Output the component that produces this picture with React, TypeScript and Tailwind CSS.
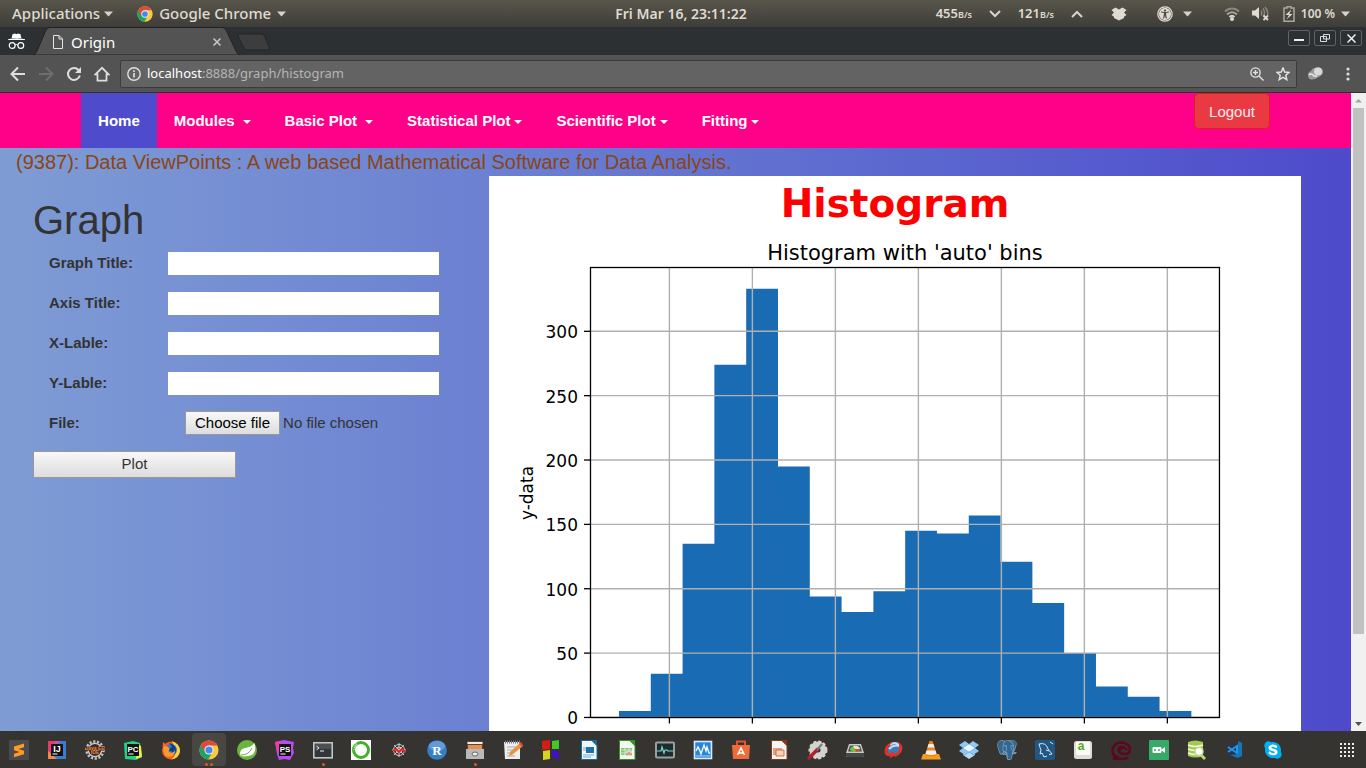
import type { ReactNode } from "react";
import { FaSkype, FaUniversalAccess } from "react-icons/fa";
import { SiPostgresql } from "react-icons/si";

function Triangle() {
  return (
    <svg width="9" height="6" viewBox="0 0 9 6" aria-hidden="true">
      <path d="M0 0.5h9L4.5 5.5z" fill="#d6d3cc" />
    </svg>
  );
}

function ChromeLogo({ size }: { size: number }) {
  return (
    <svg width={size} height={size} viewBox="0 0 48 48" aria-hidden="true">
      <circle cx="24" cy="24" r="23" fill="#fbc93d" />
      <path d="M4 12.5A23 23 0 0 0 22 47L32 30 24 24z" fill="#1da462" />
      <path d="M4 12.5 14 30 24 13H44A23 23 0 0 0 4 12.5z" fill="#dd4b3e" />
      <circle cx="24" cy="24" r="11" fill="#f4f4f4" />
      <circle cx="24" cy="24" r="8.6" fill="#4688f1" />
    </svg>
  );
}

function Chevron({ up }: { up?: boolean }) {
  return (
    <svg width="12" height="8" viewBox="0 0 12 8" fill="none" stroke="#d8d5ce" strokeWidth="2" aria-hidden="true">
      <path d={up ? "M1 7 6 2l5 5" : "M1 1l5 5 5-5"} />
    </svg>
  );
}

function Speed({ value }: { value: string }) {
  return (
    <span className="flex w-[38px] items-baseline justify-center whitespace-nowrap">
      {value}
      <span className="text-[9px]">B/s</span>
    </span>
  );
}

function SystemBar() {
  return (
    <header className="grid h-[27px] shrink-0 grid-cols-[1fr_auto_1fr] items-center bg-linear-to-b from-[#58554b] to-[#3f3d38] pr-4 pl-3 text-[15px] leading-none font-medium text-[#dfdbd2]">
      <div className="flex items-center">
        <button className="flex items-center gap-1">
          Applications <Triangle />
        </button>
        <button className="ml-6 flex items-center gap-1.5">
          <ChromeLogo size={16} /> Google Chrome <Triangle />
        </button>
      </div>
      <time className="text-[14px] font-semibold">Fri Mar 16, 23:11:22</time>
      <div className="flex items-center justify-end text-[13px] font-semibold">
        <Speed value="455" />
        <span className="mx-4"><Chevron /></span>
        <Speed value="121" />
        <span className="mr-7 ml-4"><Chevron up /></span>
        <svg className="mr-[30px]" width="16" height="14" viewBox="0 0 16 14" fill="#dfdbd2" aria-hidden="true">
          <path d="M4.500.5 8 2.500l3.500-2L15.500 3 13 5.500 15.500 8l-2.500 1.800V11L8 13.500 3 11V9.800L.5 8 3 5.500.5 3z" />
        </svg>
        <FaUniversalAccess size={16} className="mr-2.5" />
        <span className="mr-8"><Triangle /></span>
        <svg className="mr-3" width="16" height="14" viewBox="0 0 16 14" fill="none" strokeWidth="1.8" aria-hidden="true">
          <path d="M1 4.5C5 .5 11 .5 15 4.5" stroke="#8b8880" />
          <path d="M3 7.5C6 4.5 10 4.5 13 7.5" stroke="#a5a299" />
          <path d="M5.5 10C7 8.500 9 8.500 10.500 10" stroke="#dfdbd2" />
          <circle cx="8" cy="12" r="2" fill="#dfdbd2" />
        </svg>
        <svg className="mr-3.5" width="17" height="15" viewBox="0 0 17 15" aria-hidden="true">
          <path d="M0 4.500h3L7 1v12L3 9.500H0z" fill="#dfdbd2" />
          <path d="M9 4.500q1.500 2.500 0 5M11 2.500q3 4.500 0 8M13 1q3.500 4 2.500 8" fill="none" stroke="#8b8880" strokeWidth="1.400" />
          <path d="m11.500 9.500 4.500 4.500m0-4.500-4.500 4.500" stroke="#dfdbd2" strokeWidth="1.800" />
        </svg>
        <svg className="mr-1.5" width="12" height="16" viewBox="0 0 12 16" aria-hidden="true">
          <path d="M4 2V.8h4V2h3v13.200H1V2z" fill="none" stroke="#aaa79e" strokeWidth="1.500" />
          <path d="M8.500 3.500 2.500 9H6l-2.500 4.500L9.500 8H6.200z" fill="#dfdbd2" />
        </svg>
        <span className="mr-1.5 text-[12px]">100 %</span>
        <Triangle />
      </div>
    </header>
  );
}

function TabStrip() {
  return (
    <div className="flex h-7 shrink-0 items-center bg-[#2d3033]">
      <svg className="ml-2" width="17" height="17" viewBox="0 0 17 17" aria-hidden="true">
        <path d="M4.500 1.200 7 .5l1.500.7L10 .5l2.500.7.8 3.800H3.700z" fill="#fff" />
        <path d="M0 6.200q8.500-2 17 0v.8H0z" fill="#fff" />
        <circle cx="4.200" cy="12.500" r="2.900" fill="none" stroke="#fff" strokeWidth="1.200" />
        <circle cx="12.800" cy="12.500" r="2.900" fill="none" stroke="#fff" strokeWidth="1.200" />
        <path d="M7 12q1.500-1 3 0" fill="none" stroke="#fff" />
      </svg>
      <div className="relative ml-2 flex h-7 w-[208px] items-center pt-0.5 pr-4 pl-5 text-white">
        <svg className="absolute inset-0 h-full w-full" viewBox="0 0 208 28" preserveAspectRatio="none" aria-hidden="true">
          <path d="M0 28q3-1 4-4L13 3q1-2.500 4-2.500h172q3 0 4 2.500l10 21q1 3 4 4z" fill="#535353" stroke="#1f2123" />
        </svg>
        <svg className="relative" width="10" height="14" viewBox="0 0 10 14" fill="none" stroke="#e4e4e4" aria-hidden="true">
          <path d="M.5.5h5.500l3.500 3.500v9.500h-9zM6 .5V4h3.500" />
        </svg>
        <span className="relative ml-2 text-[15px] leading-none">Origin</span>
        <button className="relative mr-1 ml-auto" aria-label="Close tab">
          <svg width="8" height="8" viewBox="0 0 8 8" stroke="#c8c8c8" strokeWidth="1.500"><path d="m.5.5 7 7m0-7-7 7" /></svg>
        </button>
      </div>
      <button aria-label="New tab" className="-ml-1 pt-0.5">
        <svg width="34" height="18" viewBox="0 0 34 18">
          <path d="M2.500 1h22q2 0 3 2l5 12q1 2-1.500 2H10q-2 0-3-2L1 3Q.5 1 2.500 1z" fill="#3d3d3d" stroke="#232527" />
        </svg>
      </button>
      <div className="mr-1 mb-1.5 ml-auto flex gap-1">
        <button aria-label="Minimize" className="grid h-4 w-[22px] place-items-center rounded-xs border border-[#606264]">
          <svg width="10" height="8" viewBox="0 0 10 8"><path d="M0 6h10" stroke="#eee" strokeWidth="2" /></svg>
        </button>
        <button aria-label="Restore" className="grid h-4 w-[22px] place-items-center rounded-xs border border-[#606264]">
          <svg width="10" height="8" viewBox="0 0 10 8" fill="none" stroke="#ddd"><path d="M3.500.5h6v4.500h-6zM.5 2.500h6v5h-6z" /></svg>
        </button>
        <button aria-label="Close" className="grid h-4 w-[22px] place-items-center rounded-xs border border-[#606264]">
          <svg width="9" height="9" viewBox="0 0 9 9" stroke="#eee" strokeWidth="1.500"><path d="m.5.5 8 8m0-8-8 8" /></svg>
        </button>
      </div>
    </div>
  );
}

function Toolbar() {
  return (
    <div className="flex h-[38px] shrink-0 items-center border-b border-[#303030] bg-[#535353] pr-[14px] pl-2.5">
      <button aria-label="Back">
        <svg width="16" height="16" viewBox="0 0 16 16" fill="none" stroke="#dedede" strokeWidth="2"><path d="M15 8H2M8 1.500 1.500 8 8 14.500" /></svg>
      </button>
      <button aria-label="Forward" className="ml-3">
        <svg width="16" height="16" viewBox="0 0 16 16" fill="none" stroke="#6e6e6e" strokeWidth="2"><path d="M1 8h13M8 1.500 14.500 8 8 14.500" /></svg>
      </button>
      <button aria-label="Reload" className="ml-3">
        <svg width="16" height="16" viewBox="0 0 16 16"><path d="M13.800 9.500A6 6 0 1 1 12.500 4" fill="none" stroke="#dedede" strokeWidth="2" /><path d="M15 1v6H9z" fill="#dedede" /></svg>
      </button>
      <button aria-label="Home page" className="ml-3">
        <svg width="16" height="16" viewBox="0 0 17 16" fill="none" stroke="#dedede" strokeWidth="1.900"><path d="M1.500 8.500 8.500 1.500l7 7h-2.200V15H3.700V8.500z" /></svg>
      </button>
      <div className="ml-2.5 flex h-7 flex-1 items-center rounded-xs border border-[#3c3c3c] bg-[#636363] px-1.5">
        <svg width="14" height="14" viewBox="0 0 14 14" aria-hidden="true">
          <circle cx="7" cy="7" r="6.200" fill="none" stroke="#e2e2e2" strokeWidth="1.400" />
          <path d="M7 6v4.500M7 3.200v1.700" stroke="#e2e2e2" strokeWidth="1.600" />
        </svg>
        <a href="#graph" className="ml-1.5 text-[13px] leading-none text-[#b5b5b5]">
          <span className="text-white">localhost</span>:8888/graph/histogram
        </a>
        <button aria-label="Zoom" className="ml-auto">
          <svg width="14" height="14" viewBox="0 0 14 14" fill="none" stroke="#e2e2e2" strokeWidth="1.400"><circle cx="5.500" cy="5.500" r="4.600" /><path d="m9 9 4.500 4.500M3 5.500h5M5.500 3v5" /></svg>
        </button>
        <button aria-label="Bookmark" className="ml-3">
          <svg width="14" height="14" viewBox="0 0 14 14" fill="none" stroke="#e2e2e2" strokeWidth="1.500"><path d="m7 1 1.700 4 4.400.4-3.300 2.900 1 4.300L7 10.300l-3.800 2.300 1-4.300L.9 5.400 5.300 5z" /></svg>
        </button>
      </div>
      <button aria-label="Extension" className="ml-2.5">
        <svg width="17" height="14" viewBox="0 0 17 14">
          <path d="M1 8q0-3 3-4 1-3 5-3.500Q15-.5 16 4q.5 3.500-3.500 5.500Q8 13 4 12.500.8 11.500 1 8z" fill="#9b9b9b" />
          <circle cx="11" cy="4.500" r="4" fill="#d9d9d9" />
          <path d="M2 8q2-2 4 0t4 1" fill="none" stroke="#e8e8e8" strokeWidth="1.500" />
        </svg>
      </button>
      <button aria-label="Menu" className="ml-5">
        <svg width="8" height="14" viewBox="0 0 8 14" fill="#dedede"><circle cx="4" cy="2" r="1.600" /><circle cx="4" cy="7" r="1.600" /><circle cx="4" cy="12" r="1.600" /></svg>
      </button>
    </div>
  );
}

const menus = [
  { label: "Modules", gap: true },
  { label: "Basic Plot", gap: true },
  { label: "Statistical Plot", gap: false },
  { label: "Scientific Plot", gap: false },
  { label: "Fitting", gap: false },
];

function NavBar() {
  return (
    <nav className="flex h-[55px] items-start bg-[#ff0088] px-[6%] text-[15px] font-bold text-white">
      <a href="#home" className="flex h-full items-center bg-[#4e4bcc] px-[17px] pt-0.5">Home</a>
      {menus.map((m) => (
        <a key={m.label} href={"#" + m.label} className="flex h-full items-center px-[17px] pt-0.5">
          {m.label}
          <svg className={m.gap ? "ml-2" : "ml-1"} width="8" height="4" viewBox="0 0 8 4" aria-hidden="true">
            <path d="M0 0h8L4 4z" fill="#fff" />
          </svg>
        </a>
      ))}
      <button className="ml-auto h-9 rounded-[5px] border border-[#e01b22] bg-[#e93a44] px-[14px] pt-0.5 text-[15px] font-normal text-[#ffeef0]">Logout</button>
    </nav>
  );
}

const fields = ["Graph Title:", "Axis Title:", "X-Lable:", "Y-Lable:"];

function GraphForm() {
  return (
    <form className="w-[36.2%] shrink-0 pt-5 pr-[50px] pl-[33px] text-[15px] text-[#333]">
      <h2 className="text-[40px] leading-[48px]">Graph</h2>
      <div className="mt-[7px] flex flex-col gap-4">
        {fields.map((label) => (
          <div key={label} className="flex h-6 items-center pl-4">
            <label htmlFor={label} className="w-[119px] font-bold">{label}</label>
            <input id={label} type="text" className="h-[23px] min-w-0 flex-1 bg-white px-1 outline-none" />
          </div>
        ))}
        <div className="flex h-6 items-center pl-4">
          <label htmlFor="data-file" className="w-[136px] font-bold">File:</label>
          <label htmlFor="data-file" className="flex items-center gap-[3px] whitespace-nowrap">
            <span className="flex h-6 items-center border border-[#999] bg-linear-to-b from-[#f8f8f8] to-[#dddddd] px-[9px] text-black">Choose file</span>
            No file chosen
          </label>
          <input id="data-file" type="file" className="sr-only" />
        </div>
        <button type="button" className="h-[27px] w-1/2 border border-[#999] bg-linear-to-b from-[#f8f8f8] to-[#dddddd]">Plot</button>
      </div>
    </form>
  );
}

const counts = [5, 34, 135, 274, 333, 195, 94, 82, 98, 145, 143, 157, 121, 89, 50, 24, 16, 5];
const yTicks = [0, 50, 100, 150, 200, 250, 300];
const xTicks = [0, 1, 2, 3, 4, 5, 6];
const base = 486.5;
const yOf = (v: number) => base - v * 1.2873;
const xOf = (i: number) => 180.4 + i * 83;
const barEdge = (i: number) => 130 + i * 31.8;
const outline =
  `M${barEdge(0)} ${base}` +
  counts.map((c, i) => `V${yOf(c)}H${barEdge(i + 1)}`).join("") +
  `V${base}z`;

function Histogram() {
  return (
    <svg className="block h-auto w-full" viewBox="0 0 812 500" fontFamily="DejaVu Sans, sans-serif" role="img" aria-label="Histogram with 'auto' bins">
      <text x="416" y="29" fontSize="21" textAnchor="middle">Histogram with 'auto' bins</text>
      <path d={outline} fill="#196bb4" />
      <g stroke="#b0b0b0" strokeWidth="1.400">
        {yTicks.map((v) => <path key={v} d={`M101.500 ${yOf(v)}H730.500`} />)}
        {xTicks.map((i) => <path key={i} d={`M${xOf(i)} 36.500V${base}`} />)}
      </g>
      <g stroke="#000" strokeWidth="1.300">
        {yTicks.map((v) => <path key={v} d={`M95 ${yOf(v)}h6`} />)}
        {xTicks.map((i) => <path key={i} d={`M${xOf(i)} ${base}v6`} />)}
      </g>
      <rect x="101.500" y="36.500" width="629" height="450" fill="none" stroke="#000" strokeWidth="1.300" />
      {yTicks.map((v) => (
        <text key={v} x="89" y={yOf(v) + 7} fontSize="17" textAnchor="end">{v}</text>
      ))}
      <text transform="translate(44 262) rotate(-90)" fontSize="17" textAnchor="middle">y-data</text>
    </svg>
  );
}

function Page() {
  return (
    <div className="flex min-h-0 flex-1 overflow-hidden font-['Liberation_Sans',Arial,sans-serif]">
      <main className="min-w-0 flex-1 bg-linear-to-r from-[#7f9cd4] to-[#4e4acb]">
        <NavBar />
        <p className="pl-4 text-[20px] leading-7 text-[#8b4513]">(9387): Data ViewPoints : A web based Mathematical Software for Data Analysis.</p>
        <div className="flex">
          <GraphForm />
          <section className="mr-[50px] min-w-0 flex-1 bg-white">
            <h1 className="h-[55px] text-center font-['DejaVu_Sans',sans-serif] text-[39px] leading-[55px] font-bold text-[#ff0000]">Histogram</h1>
            <Histogram />
          </section>
        </div>
      </main>
      <div className="flex w-[15px] shrink-0 flex-col items-center bg-[#f1f1f1]" aria-hidden="true">
        <svg className="shrink-0" width="15" height="15" viewBox="0 0 15 15"><path d="M4 9.500h7L7.500 6z" fill="#a3a3a3" /></svg>
        <div className="h-[526px] w-[11px] bg-[#c1c1c1]" />
        <svg className="mt-auto shrink-0" width="15" height="15" viewBox="0 0 15 15"><path d="M4 6h7L7.500 10z" fill="#505050" /></svg>
      </div>
    </div>
  );
}

function Letters({ children, fill = "#fff", size = 9, x = 10, y = 11.5 }: { children: string; fill?: string; size?: number; x?: number; y?: number }) {
  return <text x={x} y={y} fontSize={size} fontWeight="bold" fontFamily="Liberation Sans, sans-serif" textAnchor="middle" fill={fill}>{children}</text>;
}

function Sheet({ color, children }: { color: string; children: ReactNode }) {
  return (
    <>
      <path d="M2.500.5H13l5 5v14H2.500z" fill="#f4f6f6" stroke={color} />
      <path d="M12 0h6v6z" fill={color} />
      {children}
    </>
  );
}

const apps: { name: string; art: ReactNode; dots?: number; active?: boolean }[] = [
  { name: "Sublime Text", art: <><rect width="20" height="20" rx="1" fill="#4b4b4d" /><path d="M15 3.500v3.700L9.500 9l5.500 1.700v3.600L5 17.300v-3.600l5.500-1.800L5 10.200V6.600z" fill="#ff9b1f" /></> },
  { name: "IntelliJ IDEA", art: <><path d="M1 1h18v18H1z" fill="#397bd5" /><path d="M1 1h11l-6 13H1z" fill="#e8396f" /><path d="m1 11 9 8H1z" fill="#ef8a4f" /><path d="M8 1h5l-2 4H7z" fill="#b45bb0" /><path d="M4 4h12v12H4z" fill="#111" /><Letters>IJ</Letters><path d="M5.500 14h5" stroke="#fff" /></> },
  { name: "Java EE IDE", art: <><circle cx="10" cy="10" r="8.500" fill="none" stroke="#bfc3c5" strokeWidth="2.500" strokeDasharray="2.200 1.600" /><circle cx="10" cy="10" r="6.700" fill="#382b38" stroke="#c8cacc" strokeWidth="1.300" /><path d="M1 6.500h18v4H1zM5 10h10v4H5z" fill="#382b38" /><Letters fill="#e98722" size={5} y={10}>Java EE</Letters><Letters fill="#e98722" size={5} y={14}>IDE</Letters></> },
  { name: "PyCharm", art: <><path d="m1 3 9-2 7 2 1 7 1 7-6 3-11-1z" fill="#27cf84" /><path d="m14 4 4 2 1 11-6 2z" fill="#e8f04c" /><path d="M4 4h12v12H4z" fill="#111" /><Letters size={8}>PC</Letters><path d="M5.500 14h5" stroke="#fff" /></> },
  { name: "Firefox", art: <><circle cx="10" cy="10.500" r="9" fill="#f55a24" /><path d="M11 1q8 3 8 10a9 9 0 0 1-9 8.500Q18 15 11 1z" fill="#ffd43b" /><path d="M1.500 7 2 2l3 2.500z" fill="#f46b2c" /><circle cx="10" cy="10" r="6" fill="#1787dc" /><path d="M8 3q7 1 7 8-2 6-9 4 5 0 5-4-3 1-5-2 3-1 5-2z" fill="#123d8f" /><path d="M2 7q3-2 5 0l2 2q-2 1-1 3 4 2 6-2 0 7-6 7T2 7z" fill="#ff9926" /></> },
  { name: "Google Chrome", art: <ChromeLogo size={20} />, dots: 2, active: true },
  { name: "Spring", art: <><circle cx="10" cy="10" r="10" fill="#6bb43d" /><path d="M17.500 3q3 12-6 13-6 1-8-.5-1.500-5 3-7Q15 7 17.500 3z" fill="#fff" /><path d="M4 15q8 0 11-7" fill="none" stroke="#6bb43d" /></> },
  { name: "PhpStorm", art: <><path d="m0 2 9-2 10 2-1 6 1 5-4 7-6-1-5 1-2-6z" fill="#b94af7" /><path d="m0 2 6-1-3 13z" fill="#f43d9b" /><path d="M4 4h12v12H4z" fill="#111" /><Letters size={8}>PS</Letters><path d="M5.500 14h5" stroke="#fff" /></> },
  { name: "Terminal", art: <><rect x=".8" y="2.800" width="18.400" height="15" fill="#333638" stroke="#c3c6c6" strokeWidth="1.600" /><path d="M2 4h16v5H2z" fill="#4c5052" /><path d="m3.500 6 2.500 2-2.500 2M7 11h4" fill="none" stroke="#eee" /></>, dots: 1 },
  { name: "Anaconda", art: <><rect width="20" height="20" fill="#fff" /><circle cx="10" cy="10" r="7.500" fill="none" stroke="#43b02a" strokeWidth="3" /><path d="M5 3 3 8M6 4 2 11" stroke="#fff" strokeDasharray="1 1" /></> },
  { name: "Spyder", art: <><g fill="none" stroke="#c9c9c9"><circle cx="10" cy="10" r="5.500" /><circle cx="10" cy="10" r="3" /><path d="M10 3v14M3 10h14M5 5l10 10M15 5 5 15" /></g><path d="m4 11 3-2 3 3 3-3 4 3" fill="none" stroke="#ee2222" strokeWidth="2" /></> },
  { name: "RStudio", art: <><circle cx="10" cy="10" r="9.800" fill="#357ec8" /><ellipse cx="10" cy="6" rx="8" ry="5" fill="#7eb1e3" opacity=".6" /><text x="10" y="14.500" fontSize="13" fontWeight="bold" fontFamily="Liberation Serif, serif" textAnchor="middle" fill="#fff">R</text></> },
  { name: "Files", art: <><path d="M2 1h16v10H2z" fill="#5b4237" /><path d="M2.500 2h15v2h-15z" fill="#eee" /><path d="M3 5h14v5H3z" fill="#e98f4c" /><path d="M1 9h18v10H1z" fill="#b9bab8" /><ellipse cx="10" cy="14" rx="3" ry="2" fill="#eee" stroke="#666" /></>, dots: 1 },
  { name: "Text Editor", art: <><path d="M1 2h16v17H2z" fill="#eee" /><path d="M2 2h15" stroke="#777" strokeWidth="3" strokeDasharray="1 1" /><path d="M4 7h9M4 10h7M4 13h5M4 16h8" stroke="#aaa" /><path d="M17 3 20 6 9 15l-3 1 1-4z" fill="#e79540" /><path d="m16 4 2-2 2 3-1 2z" fill="#e04a4a" /></> },
  { name: "Color Blocks", art: <><path d="M1 1 9 0v9L1 10z" fill="#d51d14" /><path d="m11 1 7-1v9h-7z" fill="#43c927" /><path d="m2 11 7-1v9l-7 1z" fill="#d8d320" /><path d="m11 10 7 1v8l-7-1z" fill="#4212bf" /></> },
  { name: "Writer", art: <Sheet color="#0d6da8"><path d="M4 8h5M4 10h5M4 15h11M4 17h8" stroke="#75a8c7" /><path d="M7 7h8v6H7z" fill="#1b73ad" /></Sheet> },
  { name: "Calc", art: <Sheet color="#31981b"><path d="M4 8h11v7H4z" fill="#7fc66c" /><path d="M4 10h11M4 13h11M8 8v7M12 8v7" stroke="#fff" strokeWidth=".6" /><path d="M9 11h6v5H9z" fill="#d9dcd3" /><path d="M10 15v-2m2 2v-3m2 3v-2" stroke="#d46430" /></Sheet> },
  { name: "System Monitor", art: <><rect x="1" y="2.500" width="18" height="15" rx="1" fill="#1d2d2d" stroke="#9a9f9f" strokeWidth="2" /><path d="M2 11h4l1-4 2 6 1-3h2l1 1h5" fill="none" stroke="#7dd6ce" strokeWidth="1.200" /></> },
  { name: "Monitor", art: <><rect x="1.500" y="1.500" width="17" height="17" fill="#2785dc" stroke="#d6edff" strokeWidth="1.600" /><path d="m3 11 2-4 2 4 1 3 3-9 2 6 1-4 2 6h1" fill="none" stroke="#fff" strokeWidth="1.300" /><path d="M3 16h14" stroke="#a8d6fa" /></> },
  { name: "Software", art: <><path d="M6 6V1.500h8V6" fill="none" stroke="#e8522c" strokeWidth="2" /><path d="M1 5h18l-1 14H2z" fill="#ef6b3a" /><path d="m6.500 15 3.500-7 3.500 7M7 13h6" fill="none" stroke="#fff" strokeWidth="1.500" /></> },
  { name: "Impress", art: <Sheet color="#8b3615"><path d="M4 8h9v7H4z" fill="#e8a080" /><path d="M7 10h8v6H7z" fill="#f2d5bf" stroke="#cf7045" /></Sheet> },
  { name: "Tweaks", art: <><circle cx="11" cy="10" r="5.500" fill="none" stroke="#d3d3d0" strokeWidth="6" /><circle cx="11" cy="10" r="8.500" fill="none" stroke="#d3d3d0" strokeWidth="2" strokeDasharray="3 2" /><path d="m2 18 8-8" stroke="#b51f2c" strokeWidth="3.500" strokeLinecap="round" /><path d="m10 10 5-6" stroke="#77797a" strokeWidth="2" /></> },
  { name: "Disk Usage", art: <><path d="M4 4h12l3 9v3q0 1-2 1H3q-2 0-2-1v-3z" fill="#c8cbc5" /><path d="M1 13h18v3q0 1-2 1H3q-2 0-2-1z" fill="#454848" /><path d="M5 5.500h10l2 6H3z" fill="#4a4e4b" /><ellipse cx="10" cy="9" rx="5" ry="3" fill="#6fc04a" /><path d="M10 9 8 6q6-1 7 3z" fill="#e8e4d0" /><path d="M10 9h5q-1 3-4 3z" fill="#df4b32" /></> },
  { name: "Web Tool", art: <><circle cx="11" cy="9" r="7" fill="#3c79b9" /><path d="M7 5q5-4 9 0M6 9q5-5 10-3" fill="none" stroke="#c8dcf0" strokeWidth="2" /><path d="M10 2Q2 4 1.500 11q0 6 6 5l-.5 2.500 6-4-4.500-3.500-.5 2.200Q4.500 14 4.500 10.500 5.500 5 10 2z" fill="#e72f25" /><path d="M12 17q7-3 7.500-9Q19 3 14 1.500 18 6 16 10t-5 5z" fill="#e72f25" /></> },
  { name: "VLC", art: <><path d="M2 14h16l2 5.500H0z" fill="#f79b1c" /><path d="M8.500 1h3L16 15q-6 3-12 0z" fill="#ef861a" /><path d="m7.600 4h4.800l1.100 3.500h-7zM5.500 10.500h9l1 3.500q-5 2-11 0z" fill="#eee" /></> },
  { name: "Dropbox", art: <><path d="m6 1 4 3-6 4-4-3zM14 1l6 4-4 3-6-4zM4 8l6 4-4 3-6-4zM16 8l4 3-6 4-4-3z" fill="#8ac9fb" /><path d="m4 8 6-4 6 4-6 4z" fill="#e7f6ff" /><path d="m4 14 2 1 4-3v7l-6-4zm12 0-2 1-4-3v7l6-4z" fill="#b6dcfa" /></> },
  { name: "PostgreSQL", art: <><path d="M1 5q0-4 5-4 4-1 7 0 6-1 6 4 0 4-2 7l2 1q-2 2-4 2 0 4-3 4-3 0-3-4l-3 0Q1 15 1 5z" fill="#336791" /><SiPostgresql size={20} color="#8fadc6" /></> },
  { name: "MySQL Workbench", art: <><rect width="20" height="20" rx="2" fill="#225784" /><path d="M4 4q7-2 9 5l4 5-3 .5M4 4q1 4 2 6l-1 4 2-1 2 4 3-1M11 10l3 1M15 2l3 2" fill="none" stroke="#d7e8f3" /></> },
  { name: "Artha", art: <><rect width="18" height="18" x="1" y="1" rx="2.500" fill="#deded9" /><rect x="3" y="2" width="14" height="13" rx="1" fill="#fafaf7" /><Letters fill="#53a81b" size={12} x={8} y={10}>a</Letters></> },
  { name: "GNU Tool", art: <><path d="M17 17q-1 2-7 2t-8-1q3 0 4-1-4-1-4.500-6Q2 3 10 2.500 18.500 3 19 9q0 5-5 5-6 0-6.500-4Q8 6 12 7" fill="none" stroke="#5c0720" strokeWidth="2.600" /><path d="m9 10 4-3 3 3" fill="none" stroke="#5c0720" strokeWidth="2" /></> },
  { name: "Screen Recorder", art: <><rect width="20" height="20" rx="1" fill="#37aa68" /><rect x="3.500" y="7" width="9" height="6" rx="1" fill="#fff" /><path d="m12 10 4-3v6z" fill="#fff" /><circle cx="6" cy="10" r="1" fill="#37aa68" /><circle cx="10" cy="10" r="1" fill="#37aa68" /></> },
  { name: "Database Browser", art: <><path d="M1 2q7-3 15 0v14q-7 3-15 0z" fill="#a3c94f" /><path d="M1 5q7 3 15 0M1 9q7 3 15 0M1 13q7 3 15 0" fill="none" stroke="#f0f5df" strokeWidth="1.500" /><path d="m14 15 4 4" stroke="#b9d76d" strokeWidth="3" /><circle cx="12" cy="11.500" r="4" fill="#fff" stroke="#bfd88b" strokeWidth="1.500" /></> },
  { name: "Visual Studio Code", art: <><path d="M2 5 14 2v13L2 18z" fill="#2b3440" /><path d="m13 1 4 2v13l-4 2-8-3 8-1z" fill="#1674bd" /><path d="m3 7 9 6V6l-9 6" fill="none" stroke="#2496e8" strokeWidth="2" /></> },
  { name: "Skype", art: <><circle cx="10" cy="10" r="7" fill="#fff" /><FaSkype size={20} color="#00aff0" /></> },
];

function Dock() {
  return (
    <footer className="flex h-[37px] shrink-0 items-center bg-[#363430] pr-3">
      {apps.map((app) => (
        <button key={app.name} aria-label={app.name} className="grid h-full w-[38px] place-items-center px-0.5 py-[2px]">
          <span className={app.active ? "relative grid h-full w-full place-items-center rounded-[4px] bg-[#494743]" : "relative grid h-full w-full place-items-center"}>
            <svg width="20" height="20" viewBox="0 0 20 20" overflow="visible">
              {app.art}
            </svg>
            {app.dots && (
              <span className="absolute inset-x-0 bottom-0 flex justify-center gap-0.5">
                {Array.from({ length: app.dots }, (_, i) => <span key={i} className="size-[3px] rounded-full bg-[#e95420]" />)}
              </span>
            )}
          </span>
        </button>
      ))}
      <button aria-label="Show applications" className="ml-auto">
        <svg width="14" height="14" viewBox="0 0 14 14" fill="#eee">
          {[0, 1, 2, 3].flatMap((r) => [0, 1, 2, 3].map((c) => <rect key={`${r}-${c}`} x={c * 4} y={r * 4} width="2" height="2" />))}
        </svg>
      </button>
    </footer>
  );
}

export default function App() {
  return (
    <div className="flex h-screen flex-col overflow-hidden bg-[#363430] font-['Noto_Sans',sans-serif]">
      <SystemBar />
      <TabStrip />
      <Toolbar />
      <Page />
      <Dock />
    </div>
  );
}
